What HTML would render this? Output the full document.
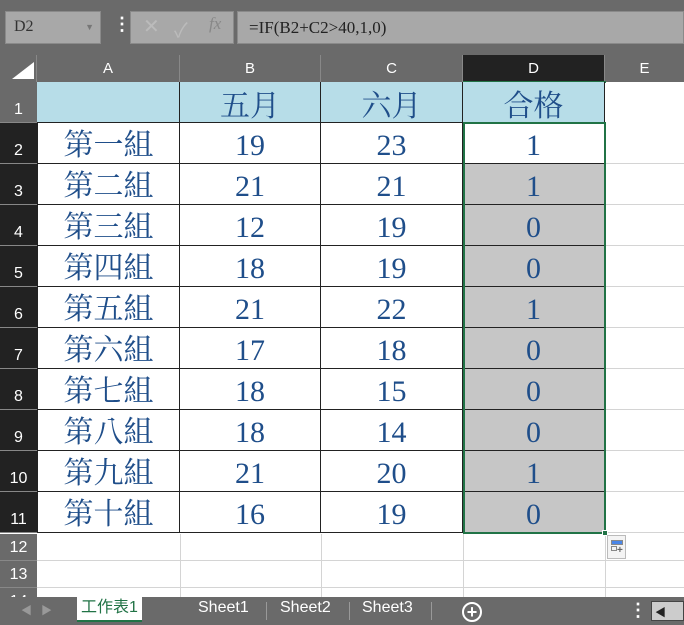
<!DOCTYPE html>
<html><head><meta charset="utf-8"><style>
*{margin:0;padding:0;box-sizing:border-box}
body{width:684px;height:625px;overflow:hidden;background:#fff;position:relative;font-family:"Liberation Sans","Noto Sans CJK TC",sans-serif}
.a{position:absolute}
.top{left:0;top:0;width:684px;height:55px;background:#6a6a6a}
.box{background:#a8a8a8;border:1px solid #8a8a8a;height:33px;top:11px}
.ch{top:55px;height:27px;color:#fff;font-size:15px;text-align:center;line-height:27px;background:#6a6a6a;border-right:1px solid #888}
.rh{left:0;width:37px;color:#fff;font-size:16px;text-align:center;border-bottom:1px solid #888}
.c{font-family:"Liberation Serif","Noto Serif CJK TC",serif;color:#1f4e8a;font-size:30px;text-align:center;border-right:1px solid #222;border-bottom:1px solid #222}
.g{background:#c6c6c6}
</style></head><body>
<div class="a top"></div>
<div class="a box" style="left:5px;width:96px;"><span class="a" style="left:8px;top:6px;font-size:16px;color:#333;font-family:'Liberation Serif',serif">D2</span><span class="a" style="right:6px;top:10px;font-size:9px;color:#777">▼</span></div>
<div class="a" style="left:113px;top:14px;color:#fff;font-size:18px;font-weight:bold">⋮</div>
<div class="a box" style="left:130px;width:104px;"></div>
<div class="a" style="left:143px;top:14px;color:#bbb;font-size:20px">✕</div>
<div class="a" style="left:174px;top:14px;color:#bbb;font-size:20px">✓</div>
<div class="a" style="left:209px;top:14px;color:#888;font-size:17px;font-style:italic;font-family:'Liberation Serif',serif">fx</div>
<div class="a box" style="left:237px;width:447px;"><span class="a" style="left:11px;top:6px;font-size:17px;color:#222;font-family:'Liberation Serif',serif">=IF(B2+C2&gt;40,1,0)</span></div>
<div class="a" style="left:0;top:55px;width:37px;height:27px;background:#6a6a6a;border-right:1px solid #888"></div>
<div class="a" style="left:12px;top:62px;width:0;height:0;border-left:22px solid transparent;border-bottom:17px solid #fff"></div>
<div class="a ch" style="left:37px;width:143px">A</div>
<div class="a ch" style="left:180px;width:141px">B</div>
<div class="a ch" style="left:321px;width:142px">C</div>
<div class="a ch" style="left:463px;width:142px;background:#222">D</div>
<div class="a ch" style="left:605px;width:79px;border:none">E</div>
<div class="a" style="left:463px;top:81px;width:143px;height:2px;background:#217346"></div>
<!-- row headers -->
<div class="a rh" style="top:82px;height:41px;background:#6a6a6a;line-height:56px">1</div>
<div id="rows"></div>
<div class="a" style="left:37px;top:82px;width:568px;height:41px;background:#b7dde8;border-bottom:1px solid #222"></div>
<div class="a c" style="left:37px;top:82px;width:143px;height:41px;border-color:#222;line-height:50px"></div>
<div class="a c" style="left:180px;top:82px;width:141px;height:41px;line-height:50px">五月</div>
<div class="a c" style="left:321px;top:82px;width:142px;height:41px;line-height:50px">六月</div>
<div class="a c" style="left:463px;top:82px;width:142px;height:41px;line-height:50px">合格</div>
<script>
var d=[["第一組",19,23,1],["第二組",21,21,1],["第三組",12,19,0],["第四組",18,19,0],["第五組",21,22,1],["第六組",17,18,0],["第七組",18,15,0],["第八組",18,14,0],["第九組",21,20,1],["第十組",16,19,0]];
var h="";
for(var i=0;i<10;i++){var t=123+i*41;
h+='<div class="a rh" style="top:'+t+'px;height:41px;background:#222;line-height:56px">'+(i+2)+'</div>';
h+='<div class="a c" style="left:37px;top:'+t+'px;width:143px;height:41px;line-height:46px;border-left:1px solid #222">'+d[i][0]+'</div>';
h+='<div class="a c" style="left:180px;top:'+t+'px;width:141px;height:41px;line-height:46px">'+d[i][1]+'</div>';
h+='<div class="a c" style="left:321px;top:'+t+'px;width:142px;height:41px;line-height:46px">'+d[i][2]+'</div>';
h+='<div class="a c'+(i>0?' g':'')+'" style="left:463px;top:'+t+'px;width:142px;height:41px;line-height:46px">'+d[i][3]+'</div>';
h+='<div class="a" style="left:606px;top:'+t+'px;width:78px;height:41px;border-bottom:1px solid #d4d4d4"></div>';}
for(var j=0;j<3;j++){var t=534+j*27;
h+='<div class="a rh" style="top:'+t+'px;height:27px;background:#6a6a6a;line-height:28px">'+(j+12)+'</div>';
h+='<div class="a" style="left:37px;top:'+t+'px;width:647px;height:27px;border-bottom:1px solid #d4d4d4"></div>';}
[180,321,463,605].forEach(function(x){h+='<div class="a" style="left:'+x+'px;top:534px;width:1px;height:63px;background:#d4d4d4"></div>';});
document.getElementById('rows').outerHTML=h;
</script>
<div class="a" style="left:463px;top:122px;width:143px;height:412px;border:2px solid #217346"></div>
<div class="a" style="left:602px;top:530px;width:6px;height:6px;background:#217346;border:1px solid #fff"></div>
<div class="a" style="left:607px;top:535px;width:19px;height:24px;border:1px solid #bbb;background:#f4f4f4"><div class="a" style="left:3px;top:4px;width:12px;height:5px;border:1px solid #888;background:#4a86e8"></div><div class="a" style="left:3px;top:10px;width:6px;height:5px;border:1px solid #888"></div><span class="a" style="left:9px;top:9px;font-size:10px;color:#666;font-weight:bold">+</span></div>
<!-- tab bar -->
<div class="a" style="left:0;top:597px;width:684px;height:28px;background:#6a6a6a"></div>
<div class="a" style="left:21px;top:602px;color:#999;font-size:11px">◀</div>
<div class="a" style="left:41px;top:602px;color:#999;font-size:11px">▶</div>
<div class="a" style="left:101px;top:597px;width:41px;height:25px;background:#fff;border-bottom:2px solid #217346;width:41px"></div>
<div class="a" style="left:77px;top:597px;width:65px;height:25px;background:#fff;border-bottom:2px solid #217346;color:#217346;font-size:16px;text-align:center;line-height:22px;left:77px">工作表1</div>
<div class="a" style="left:142px;top:597px;width:65px;height:25px;background:#6a6a6a"></div>
<div class="a" style="left:198px;top:597px;color:#fff;font-size:16px;line-height:22px">Sheet1</div>
<div class="a" style="left:280px;top:597px;color:#fff;font-size:16px;line-height:22px">Sheet2</div>
<div class="a" style="left:362px;top:597px;color:#fff;font-size:16px;line-height:22px">Sheet3</div>
<div class="a" style="left:266px;top:602px;width:1px;height:18px;background:#999"></div>
<div class="a" style="left:349px;top:602px;width:1px;height:18px;background:#999"></div>
<div class="a" style="left:431px;top:602px;width:1px;height:18px;background:#999"></div>
<div class="a" style="left:462px;top:602px;width:20px;height:20px;border:2px solid #fff;border-radius:50%;color:#fff;text-align:center;line-height:16px;font-size:18px;font-weight:bold">+</div>
<div class="a" style="left:629px;top:600px;color:#fff;font-size:18px;font-weight:bold">⋮</div>
<div class="a" style="left:651px;top:601px;width:33px;height:20px;background:#ccc;border:1px solid #444"><span class="a" style="left:3px;top:2px;font-size:11px;color:#222">◀</span></div>
</body></html>
